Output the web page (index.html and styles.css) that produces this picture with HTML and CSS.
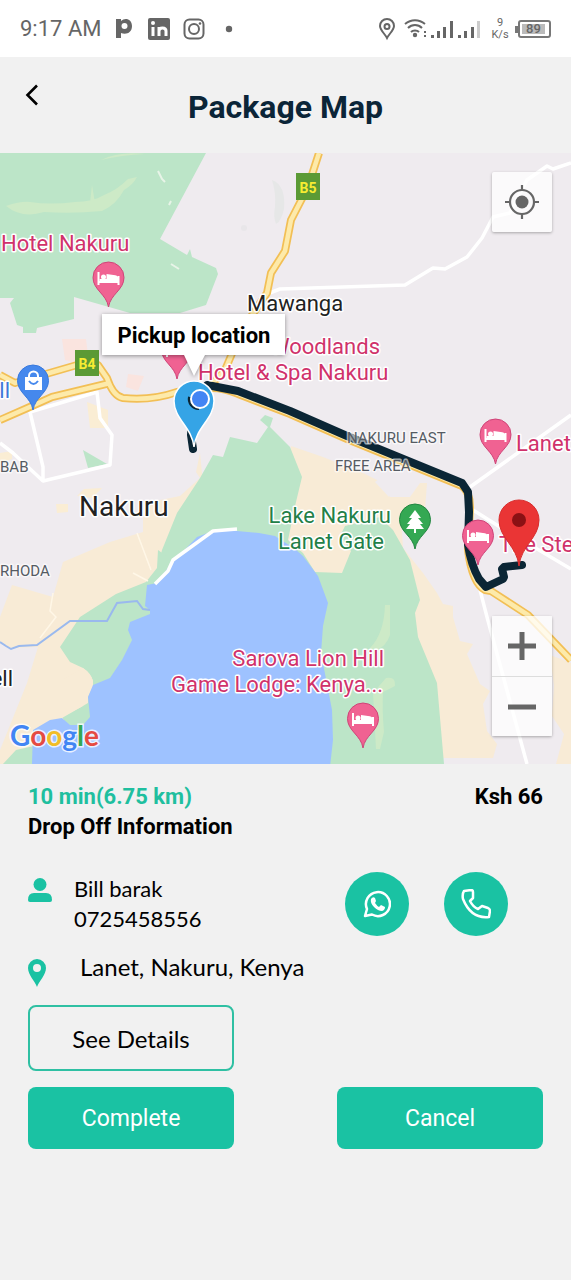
FILE: index.html
```html
<!DOCTYPE html>
<html lang="en">
<head>
<meta charset="utf-8">
<meta name="viewport" content="width=device-width, initial-scale=1">
<title>Package Map</title>
<link rel="stylesheet" href="styles.css">
</head>
<body>
<div class="status">
  <span class="status-time">9:17 AM</span>
  <svg class="status-apps" width="120" height="24" viewBox="0 0 120 24" aria-hidden="true">
    <path d="M0 2h5v2c4-4 11-2 11 5s-6 9-11 7v5H0z" fill="#666"/><circle cx="8.500" cy="9" r="3" fill="#fff"/>
    <rect x="32" y="1" width="22" height="22" rx="2" fill="#666"/>
    <path d="M37 10v9M43 19v-9M43 14c0-4 7-4 7 0v5" fill="none" stroke="#fff" stroke-width="3"/><circle cx="37" cy="6" r="2" fill="#fff"/>
    <rect x="68.500" y="2.500" width="19" height="19" rx="5" fill="none" stroke="#666" stroke-width="2"/>
    <circle cx="78" cy="12" r="5" fill="none" stroke="#666" stroke-width="2"/><circle cx="84" cy="6.500" r="1.300" fill="#666"/>
    <circle cx="113" cy="12" r="3.200" fill="#666"/>
  </svg>
  <svg class="status-signal" width="104" height="24" viewBox="0 0 104 24" aria-hidden="true">
    <g fill="none" stroke="#666" stroke-width="2">
      <path d="M9 21C7 17 2 13 2 9a7 7 0 0 1 14 0c0 4-5 8-7 12z"/><circle cx="9" cy="9.500" r="2.500"/>
      <path d="M27 7c6-5 14-5 20 0M30 11c4-4 10-4 14 0M33 15c2-2 6-2 8 0"/>
    </g>
    <g fill="#666"><circle cx="37" cy="18" r="2.200"/><path d="M46 14h2v2h-2zM46 18h2v2h-2zM53 18h3v3h-3zM59 14h3v7h-3zM65 10h3v11h-3zM72 4h3v17h-3zM80 18h3v3h-3zM86 14h3v7h-3zM93 10h3v11h-3z"/></g>
    <path d="M99 4h3v17h-3z" fill="#ccc"/>
  </svg>
  <span class="status-rate">9<br>K/s</span>
  <span class="battery"><span class="battery-level">89</span></span>
</div>

<header class="header">
  <button class="back" type="button" aria-label="Back">
    <svg width="14" height="22" viewBox="0 0 14 22"><path d="M12 1.500L2.500 11l9.500 9.500" fill="none" stroke="#000" stroke-width="2.600"/></svg>
  </button>
  <h1 class="title">Package Map</h1>
</header>

<main>
<section class="map" aria-label="Delivery route">
<svg class="map-art" viewBox="0 153 571 611">
  <defs>
    <g id="bed"><path d="M-10-35v13M10-31v9M-10-25H10" stroke="#fff" stroke-width="2" fill="none"/><circle cx="-5" cy="-30" r="2.500" fill="#fff"/><path d="M-9-26h19v-3q-1-3-5-3l-7-1v5h-7z" fill="#fff"/></g>
    <path id="drop" d="M0 0C-2-13-15.500-17-15.500-29.500a15.500 15.500 0 0 1 31 0C15.500-17 2-13 0 0z"/>
    <g id="hotel"><use href="#drop" fill="#f06292" stroke="#cf4478"/><use href="#bed"/></g>
    <path id="big" d="M0 0C-2-20-20-28-20-46a20 20 0 0 1 40 0C20-28 2-20 0 0z"/>
    <path id="roads" d="M0 375l15 8 62-18h21l9 13q6 18 16 20 28 3 54-6l28-4M0 420l32-14 20-9 58-14M319 153l-11 34-17 33-6 31-14 22-4 20-25 37-17 40-17 18q15-1 30 6l52 20 57 25 115 47q8 6 8 21l-2 43q4 33 17 40l6 1 37 24 43 45"/>
  </defs>
  <rect y="153" width="571" height="611" fill="#efebef"/>
  <path fill="#bce5c8" d="M0 153H206L160 239 187 255 190 249 192 257 216 268 218 274 206 305 180 313H130L74 297V319L37 328 36 333H23V327L17 325 10 303 14 298H0z"/>
  <path fill="#cdeac7" d="M6 206q15-5 24-4 20 3 45 0 18 0 29-7 13-5 24-16l9-2q-4 8-13 13-8 15-22 21-30 3-58 1-22 7-38-6zM101 160q18-9 44-6-23 1-44 6zM90 203l2-18 3 18z"/>
  <path d="M158 171l4 8 3 3M171 264l8 5M169 205l2-4" stroke="#e8f4e8" stroke-width="2" fill="none"/>
  <path d="M272 180q14 5 12 29-3 13-8 15-3-8-1-17 1-15-3-27z" fill="#e6e7e7"/><circle cx="244" cy="228" r="3" fill="#e8e6e9"/>
  <path d="M62 339h24l2 16-10 9-13-4zM128 374l16 2-6 15-12-4z" fill="#fae4df"/>
  <path d="M87 402l21 8v18H90zM84 489l18-1-10 10-15-2zM56 504h12v8l-11 1zM0 453l12-2v8l-12 4z" fill="#faedd4"/>
  <path d="M83 450l24 14-19 4z" fill="#bce5c8"/>
  <path fill="#f8ebd6" d="M200 453l-4 19 4 6-20 18-30 6-7 16v14l-33 10-47 20-10 35-41-12L0 617v26l10 5 28-1-11 36L0 750v14h130l80-210z"/>
  <path fill="#f8ebd6" d="M291 446l32 11 40 16 20 10 7 14h20l10-14h7l-2 27-24 8 2 30 20 25 14 20 6 11 10 2v11l7 24 13 3-6 10 13 30 10 7-7 13 4 27 10 13-4 14h-60L280 540zM550 655l21 8v101h-15l8-30-12-18 2-30z"/>
  <path d="M375 482l10-8 10 4-6 19z" fill="#efebef"/>
  <path fill="#bce5c8" d="M157 583L158 565 162 550 177 513 200 478 213 455 223 457 230 437 257 443 268 427 260 420 265 415 273 418 270 427 290 447 302 477 296 502 288 540 303 553 315 572 342 573 351 551 340 536 345 526 380 517 393 530 410 560 420 600 415 613 418 637 437 683 444 764H320V600L250 540 180 560z"/>
  <path fill="#bce5c8" d="M158 550l-1 18-11 14-30 12-36 23-20 30 10 15 13 6q8 6 10 13l-10 25-21 11 8 12h24l50-60 10-50 30-50zM3 764l13-14 18-4v18z"/>
  <path fill="#f8ebd6" d="M83 668q8 5 10 13v6l-5 10v6l-26 15-20 2 20-40z"/>
  <path fill="#cdeac7" d="M385 605h5v30q-4 12-14 15l-6-2q14-14 15-43zM373 693l13-15q10-2 9 8l-12 6q-1 18 1 40l-4 17h-4z"/>
  <path fill="#9ec2ff" d="M32 764l1-34 17-10 12-2 8 7h13l7-8-2-20 5-12 17-7 12-18 10-20-4-10 2-8 20-8v-4l-5-4 2-21 10-2 13-18 27-28 16-6h24l22 2 16 3 20 13 8 7 15 20 10 27-5 23-2 27 11 57 1 30-3 27z"/>
  <path d="M0 642l6 4 5 3 8-3 18-1 33-24h37l10-18 20-2 6 8 7 1" stroke="#9ab9ee" stroke-width="2" fill="none"/>
  <g fill="none" stroke="#fff" stroke-width="3.500" stroke-linejoin="round">
    <path d="M571 163l-18 6-6-3-20 14-17 33-17 4-11 21-15 19-22 12-12-1-28 17-125 4-13 5M571 415l-101 72M473 510l27 17 71 42M480 590l7 27 40 147M0 443l13 10 30 28 67-16 2-30-12-17-3-26-67 20 13 55v15"/>
    <path d="M237 529l-24 2-40 29-5 11-13 13"/>
  </g>
  <path d="M137 533l14 37M53 593l-3 18 6 6-16 21M133 573l15 8" stroke="#fff7e7" stroke-width="1.500" fill="none"/>
  <g fill="none" stroke-linejoin="round"><use href="#roads" stroke="#f2bf55" stroke-width="8"/><use href="#roads" stroke="#fdeaaa" stroke-width="4.500"/></g>
  <path d="M193 449l-2-14 2-30 14-20 31 6 52 20 57 25 115 47 6 9 1 20-1 33q3 20 11 34l7 8 17-8 1-2-2-8 2-2 18-2" fill="none" stroke="#0b2635" stroke-width="8" stroke-linejoin="round" stroke-linecap="round"/>

  <g class="shield"><rect x="296" y="173" width="24" height="27"/><text x="308" y="193">B5</text><rect x="75" y="350" width="24" height="26"/><text x="87" y="369">B4</text></g>

  <use href="#hotel" x="108.500" y="307"/><use href="#hotel" x="177" y="379"/><use href="#hotel" x="495.500" y="464"/><use href="#hotel" x="478" y="565"/><use href="#hotel" x="363" y="748"/>
  <use href="#drop" x="415" y="549" fill="#34a853" stroke="#238641"/>
  <path d="M415 510l6 8h-3l5 6h-3l4 5h-8v4h-2v-4h-8l4-5h-3l5-6h-3z" fill="#fff"/>
  <use href="#drop" x="33" y="410" fill="#4588ed" stroke="#3979dd"/>
  <path d="M25 377h17v13H25z" fill="#fff"/><path d="M29 378v-2a4.500 4.500 0 0 1 9 0v2" fill="none" stroke="#fff" stroke-width="2"/><path d="M29 381q4.500 6 9 0" fill="none" stroke="#4588ed" stroke-width="2"/>

  <g class="label place"><text x="1" y="251">Hotel Nakuru</text><text x="380" y="354" class="end">Woodlands</text><text x="198" y="380">Hotel &amp; Spa Nakuru</text><text x="516" y="451">Lanet</text><text x="499" y="552">The Ste</text><text x="384" y="666" class="end">Sarova Lion Hill</text><text x="383" y="692" class="end">Game Lodge: Kenya...</text></g>
  <g class="label park"><text x="391" y="523" class="end">Lake Nakuru</text><text x="384" y="549" class="end">Lanet Gate</text></g>
  <g class="label town"><text x="247" y="311">Mawanga</text><text x="13" y="686" class="end">ell</text><text x="79" y="516" class="city">Nakuru</text></g>
  <g class="label area"><text x="347" y="443">NAKURU EAST</text><text x="335" y="471">FREE AREA</text><text x="0" y="472">BAB</text><text x="0" y="576">RHODA</text></g>
  <g class="label shop"><text x="10" y="398" class="end">ll</text></g>
  <text x="10" y="746" class="google"><tspan fill="#4285f4">G</tspan><tspan fill="#e54b42">o</tspan><tspan fill="#f2bd28">o</tspan><tspan fill="#4285f4">g</tspan><tspan fill="#34a853">l</tspan><tspan fill="#e54b42">e</tspan></text>

  <use href="#big" x="519" y="566" fill="#ea3535" stroke="#d82d2d"/><circle cx="519" cy="520" r="7" fill="#8b1114"/>
  <use href="#big" x="194" y="447" fill="#35a4e6" stroke="#fff" stroke-width="1.500"/><path d="M190 397a9 9 0 0 0 9 11" stroke="#0b2635" stroke-width="4" fill="none"/>
  <circle cx="200" cy="399" r="9" fill="#4285f4" stroke="#fff" stroke-width="2"/>
  <path class="callout" d="M102 314H285V355H205L194 376 184 355H102z"/>
  <text x="194" y="343" class="callout-text">Pickup location</text>
</svg>
<button class="map-button locate" type="button" aria-label="My location">
  <svg width="34" height="34" viewBox="0 0 34 34"><g fill="none" stroke="#666" stroke-width="2.200"><circle cx="17" cy="17" r="12"/><path d="M17 0v6M17 28v6M0 17h6M28 17h6"/></g><circle cx="17" cy="17" r="6.500" fill="#666"/></svg>
</button>
<div class="zoom">
  <button class="map-button" type="button" aria-label="Zoom in"><svg width="28" height="28" viewBox="0 0 28 28"><path d="M14 0v28M0 14h28" stroke="#666" stroke-width="5"/></svg></button>
  <button class="map-button" type="button" aria-label="Zoom out"><svg width="28" height="28" viewBox="0 0 28 28"><path d="M0 14h28" stroke="#666" stroke-width="5"/></svg></button>
</div>
</section>

<section class="details">
  <div class="summary"><span class="eta">10 min(6.75 km)</span><span>Ksh 66</span></div>
  <h2 class="heading">Drop Off Information</h2>
  <div class="contact">
    <svg class="person" width="24" height="26" viewBox="0 0 24 26" aria-hidden="true"><circle cx="12" cy="7.500" r="6.500" fill="#1ac2a3"/><path d="M0 23q0-7 6-7h12q6 0 6 7 0 2-2 2H2q-2 0-2-2z" fill="#1ac2a3"/></svg>
    <div class="contact-text">Bill barak<br>0725458556</div>
    <button class="round" type="button" aria-label="WhatsApp">
      <svg width="28" height="28" viewBox="0 0 28 28"><path d="M2 26l2-7A12 12 0 1 1 9 24.500z" fill="none" stroke="#fff" stroke-width="2.500" stroke-linejoin="round"/><path d="M8 9q2-3 4-1l1 3-1 2q2 3 4 4l2-2 4 2q0 3-3 4-4 0-8-4-4-4-3-8z" fill="#fff"/></svg>
    </button>
    <button class="round" type="button" aria-label="Call">
      <svg width="30" height="30" viewBox="0 0 30 30"><path d="M3 2l7-1q2 0 2 2v6l-3 3q3 6 8 8l4-3 6 2q2 1 2 3l-1 6Q10 30 2 10 1 5 3 2z" fill="none" stroke="#fff" stroke-width="2.500" stroke-linejoin="round"/></svg>
    </button>
  </div>
  <div class="address">
    <svg width="18" height="28" viewBox="0 0 18 28" aria-hidden="true"><path fill="#1ac2a3" fill-rule="evenodd" d="M9 28C7 22 0 16 0 9a9 9 0 0 1 18 0c0 7-7 13-9 19zM9 5a4 4 0 1 0 0 8 4 4 0 0 0 0-8z"/></svg>
    <span>Lanet, Nakuru, Kenya</span>
  </div>
  <div class="actions">
    <button class="action outline" type="button">See Details</button>
    <button class="action start" type="button">Complete</button>
    <button class="action" type="button">Cancel</button>
  </div>
</section>
</main>
</body>
</html>
```
FILE: styles.css
```css
* { box-sizing: border-box; }
body { margin: 0; background: #f1f1f1; color: #000; font-family: Roboto, "Liberation Sans", sans-serif; }
button { margin: 0; padding: 0; border: 0; background: none; font: inherit; color: inherit; cursor: pointer; }
svg { display: block; }

.status { display: flex; align-items: center; height: 57px; padding: 0 20px; background: #fff; color: #666; }
.status-time { font-size: 22px; white-space: nowrap; }
.status-apps { margin-left: 15px; }
.status-signal { margin-left: auto; }
.status-rate { width: 36px; font-size: 11px; line-height: 12px; text-align: center; }
.battery { position: relative; width: 33px; height: 18px; padding: 2px; border: 2px solid #777; border-radius: 3px; }
.battery::before { content: ""; position: absolute; left: -5px; top: 4px; width: 3px; height: 7px; background: #777; }
.battery-level { display: block; width: 23px; height: 10px; background: #bbb; font-size: 13px; font-weight: 500; line-height: 10px; text-align: center; }

.header { display: grid; grid-template-columns: 64px 1fr 64px; align-items: center; height: 96px; }
.back { align-self: start; display: grid; place-items: center; width: 64px; height: 76px; }
.title { margin: 0; padding-top: 4px; color: #0b2538; font-size: 32px; font-weight: 700; text-align: center; }

.map { position: relative; overflow: hidden; }
.map-art { width: 100%; height: auto; }
.label { font-size: 22px; stroke: #fff; stroke-width: 3px; stroke-linejoin: round; paint-order: stroke; }
.end { text-anchor: end; }
.place { fill: #d0326b; }
.park { fill: #237f48; }
.town { fill: #222; }
.city { font-size: 28px; }
.area { font-size: 15px; fill: #555b63; stroke-opacity: .6; }
.shop { fill: #3f78d8; }
.shield rect { fill: #5b9a35; }
.shield text { fill: #f7ec32; font-size: 14px; font-weight: 700; text-anchor: middle; }
.google { font-family: Lato, sans-serif; font-size: 28px; font-weight: 700; stroke: #fff; stroke-width: 3px; stroke-opacity: .8; paint-order: stroke; }
.callout { fill: #fff; filter: drop-shadow(0 1px 2px rgba(0, 0, 0, .4)); }
.callout-text { font-size: 22px; font-weight: 700; text-anchor: middle; }
.map-button { display: grid; place-items: center; width: 60px; height: 60px; background: rgba(255, 255, 255, .75); }
.locate, .zoom { position: absolute; right: 19px; border-radius: 2px; box-shadow: 0 1px 3px rgba(0, 0, 0, .3); }
.locate { top: 19px; }
.zoom { bottom: 28px; }
.zoom .map-button + .map-button { border-top: 1px solid #ddd; }

.details { padding: 18px 28px 24px; }
.summary { display: flex; justify-content: space-between; font-size: 22px; font-weight: 700; line-height: 30px; }
.eta { color: #1fbf9f; }
.heading { margin: 0; font-size: 22px; font-weight: 700; line-height: 30px; }
.contact { display: flex; align-items: center; gap: 35px; margin-top: 30px; padding-right: 35px; }
.person { align-self: start; margin-top: 5px; }
.contact-text, .address, .outline { font-family: Lato, sans-serif; font-weight: 400; }
.contact-text { flex: 1; margin-left: -13px; font-size: 22px; line-height: 30px; }
.round { display: grid; place-items: center; width: 64px; height: 64px; border-radius: 50%; background: #1ac2a3; }
.address { display: flex; align-items: flex-start; gap: 34px; margin-top: 16px; font-size: 24px; line-height: 30px; }
.address svg { margin-top: 7px; }
.actions { display: grid; grid-template-columns: 40% 40%; justify-content: space-between; row-gap: 16px; margin-top: 18px; }
.action { height: 62px; border-radius: 8px; background: #1ac2a3; color: #fff; font-size: 23px; }
.start { grid-column: 1; }
.outline { height: 66px; border: 2px solid #2fc0a3; background: transparent; color: #000; font-size: 24px; }
```
